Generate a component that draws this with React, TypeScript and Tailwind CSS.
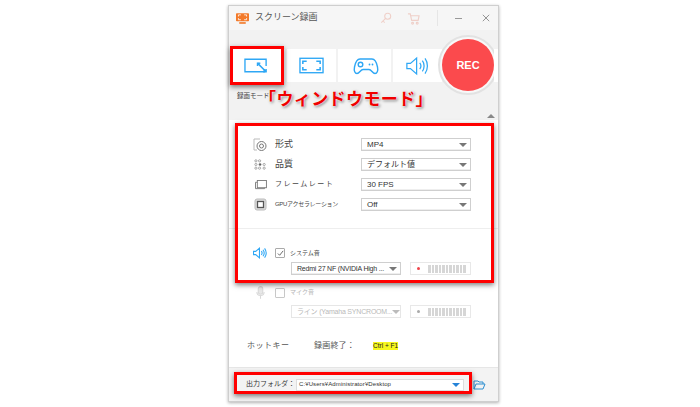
import React from "react";

const jp = "font-['Liberation_Sans','Noto_Sans_CJK_JP',sans-serif]";

const Caret = ({ color = "border-t-[#777]" }: { color?: string }) => (
  <span className={`shrink-0 w-0 h-0 border-x-[4px] border-x-transparent border-t-[4px] ${color}`} />
);

const Select = ({ text, muted = false, small = false }: { text: string; muted?: boolean; small?: boolean }) => (
  <div
    className={`w-[110px] h-[13px] flex items-center justify-between pl-[5px] pr-[3px] border bg-white leading-none ${
      muted ? "border-[#e6e6e6] text-[#b9b9b9]" : "border-[#cfcfcf] text-[#333] shadow-[inset_0_-1px_0_#eee]"
    } ${small ? "text-[7px] tracking-[-0.2px]" : "text-[8px]"}`}
  >
    <span className="whitespace-nowrap">{text}</span>
    <Caret color={muted ? "border-t-[#bbb]" : "border-t-[#777]"} />
  </div>
);

const Meter = ({ dot }: { dot: string }) => (
  <div className="w-[61px] h-[13px] ml-[9px] border border-[#e8e8e8] bg-white flex items-center pl-[6px] gap-[8px]">
    <span className={`w-[3px] h-[3px] rounded-full ${dot}`} />
    <div className="flex gap-[1px]">
      {Array.from({ length: 11 }).map((_, i) => (
        <span key={i} className="w-[2.5px] h-[8px] bg-[#d6d6d6]" />
      ))}
    </div>
  </div>
);

const ToolButton = ({ w, children }: { w: string; children: React.ReactNode }) => (
  <div className={`${w} h-[33px] bg-white flex items-center justify-center`}>{children}</div>
);

const Speaker = ({ className, weight = 1.4 }: { className: string; weight?: number }) => (
  <svg viewBox="0 0 26 22" className={className} fill="none" stroke="#2ea7f5" strokeWidth={weight}>
    <path d="M1 8h4l7-6v18l-7-6H1z" />
    <path d="M15.5 7.5c1.6 2 1.6 5 0 7M18.5 5c2.6 3.4 2.6 8.6 0 12M21.5 2.5c3.6 5 3.6 12 0 17" />
  </svg>
);

const SettingRow = ({ icon, label, value, labelClass = "text-[9px]" }: { icon: React.ReactNode; label: string; value: string; labelClass?: string }) => (
  <div className="flex items-center h-[13px]">
    <div className="w-[14px] flex justify-center">{icon}</div>
    <span className={`ml-[8px] w-[86px] whitespace-nowrap text-[#444] ${labelClass}`}>{label}</span>
    <Select text={value} />
  </div>
);

export default function App() {
  return (
    <div className={`relative w-[700px] h-[407px] bg-white overflow-hidden ${jp}`}>
      {/* window */}
      <div className="ml-[228px] mt-[5px] w-[271px] h-[397px] flex flex-col bg-white border border-[#cfcfcf] shadow-[0_1px_3px_rgba(0,0,0,0.3)]">
        <div className="h-[24px] flex items-center bg-[#f6f6f6] pl-[7px] shrink-0">
          <svg viewBox="0 0 16 13" className="w-[13px] h-[11px] shrink-0">
            <rect x="0" y="0" width="16" height="10" rx="1" fill="#f37a2a" />
            <rect x="4" y="11" width="8" height="2" fill="#f37a2a" />
            <path d="M3 4V2h3M13 4V2h-3M3 6v2h3M13 6v2h-3" stroke="#fff" fill="none" />
          </svg>
          <span className="ml-[6px] text-[9px] text-[#555] whitespace-nowrap">スクリーン録画</span>
          <svg viewBox="0 0 14 14" className="ml-[62px] w-[12px] h-[12px] shrink-0" fill="none" stroke="#efcfc8" strokeWidth="1.2">
            <circle cx="9" cy="5" r="3.5" />
            <path d="M6.5 7.5 1.5 12.5M3.5 10.5l2 2" />
          </svg>
          <svg viewBox="0 0 14 14" className="ml-[15px] w-[13px] h-[13px] shrink-0" fill="none" stroke="#efcfc8" strokeWidth="1.2">
            <path d="M1 2h2.5l1.5 7h7l1-5H4" />
            <circle cx="6" cy="12" r="1" />
            <circle cx="11" cy="12" r="1" />
          </svg>
          <span className="ml-[17px] w-px h-[16px] bg-[#e6e6e6] shrink-0" />
          <span className="ml-[17px] w-[7px] h-px bg-[#999] shrink-0" />
          <svg viewBox="0 0 10 10" className="ml-[20px] w-[8px] h-[8px] shrink-0" stroke="#888" strokeWidth="1.1">
            <path d="M1 1l8 8M9 1l-8 8" />
          </svg>
        </div>

        <div className="h-[90px] bg-[#f2f2f2] shrink-0 relative overflow-hidden">
          <div className="flex items-center mt-[19px] pl-[3px] gap-[2px]">
            <ToolButton w="w-[53px]">
              <svg viewBox="0 0 26 16" className="w-[25px] h-[16px] mr-[4px]" fill="none" stroke="#2ea7f5" strokeWidth="1.4">
                <path d="M21 11v3H1V1h22v7" />
                <path d="M14 5l9 9" strokeWidth="1.6" />
                <path d="M14 8V5h3M23 11v3h-3" fill="#2ea7f5" />
              </svg>
            </ToolButton>
            <ToolButton w="w-[49px]">
              <svg viewBox="0 0 26 17" className="w-[25px] h-[17px]" fill="none" stroke="#2ea7f5" strokeWidth="1.4">
                <rect x="1" y="1" width="24" height="15" />
                <path d="M4 7V4h4M22 7V4h-4M4 10v3h4M22 10v3h-4" strokeWidth="1.6" />
              </svg>
            </ToolButton>
            <ToolButton w="w-[53px]">
              <svg viewBox="0 0 26 18" className="w-[26px] h-[18px] ml-[2px]" fill="none" stroke="#2ea7f5" strokeWidth="1.4">
                <path d="M7 2h12c3 0 4.500 3 5.500 8 .8 4-.5 6.500-2.500 6.500-2.500 0-3.500-4-6-4h-6c-2.500 0-3.500 4-6 4-2 0-3.300-2.500-2.500-6.500C2.500 5 4 2 7 2z" />
                <circle cx="7.500" cy="7.500" r="2.300" />
                <circle cx="16.500" cy="7.500" r="0.900" fill="#2ea7f5" stroke="none" />
                <circle cx="19.500" cy="7.500" r="0.900" fill="#2ea7f5" stroke="none" />
              </svg>
            </ToolButton>
            <ToolButton w="w-[49px]">
              <Speaker className="w-[23px] h-[20px]" />
            </ToolButton>
          </div>
          <span className="absolute left-[209px] top-[5px] w-[60px] h-[60px] rounded-full bg-[#f8f8f8] border-[2px] border-[#e2e2e2]" />
          <div className="absolute left-[213px] top-[9px] w-[52px] h-[52px] rounded-full bg-[#fb4a4d] flex items-center justify-center text-white text-[11px] font-bold">
            REC
          </div>
          <span className="absolute right-0 top-[19px] w-[4px] h-[33px] bg-white" />
          <div className="mt-[9px] pl-[8px] text-[6.500px] text-[#444] whitespace-nowrap">録画モード</div>
          <span className="absolute right-[3px] bottom-[2px] w-0 h-0 border-x-[4px] border-x-transparent border-b-[4px] border-b-[#888]" />
        </div>

        <div className="flex-1 flex flex-col">
          <div className="pl-[24px] pt-[18px] flex flex-col gap-[7px] h-[109px] border-b border-[#eee]">
            <SettingRow
              label="形式"
              value="MP4"
              icon={
                <svg viewBox="0 0 14 14" className="w-[14px] h-[14px]" fill="none" stroke="#777" strokeWidth="1">
                  <path d="M1 1h6M1 1v11h3" stroke="#bbb" />
                  <circle cx="8.500" cy="8" r="4.500" />
                  <circle cx="8.500" cy="8" r="2" />
                </svg>
              }
            />
            <SettingRow
              label="品質"
              value="デフォルト値"
              icon={
                <svg viewBox="0 0 14 12" className="w-[13px] h-[11px]" fill="none" stroke="#999" strokeWidth="0.9">
                  <circle cx="2" cy="2" r="1.200" /><circle cx="6" cy="2" r="1.200" />
                  <circle cx="2" cy="6" r="1.200" /><circle cx="6.500" cy="6" r="1.200" fill="#444" /><circle cx="11" cy="6" r="1.200" />
                  <circle cx="2" cy="10" r="1.200" /><circle cx="6" cy="10" r="1.200" /><circle cx="11" cy="10" r="1.200" />
                </svg>
              }
            />
            <SettingRow
              label="フレームレート"
              labelClass="text-[7px] tracking-[1.500px]"
              value="30 FPS"
              icon={
                <svg viewBox="0 0 14 11" className="w-[13px] h-[10px]" fill="none" stroke="#777" strokeWidth="1">
                  <rect x="3.500" y="0.500" width="10" height="8" />
                  <path d="M3.500 2.500H1.500v7h10V8.500" />
                </svg>
              }
            />
            <SettingRow
              label="GPUアクセラレーション"
              labelClass="text-[6px] tracking-[-0.300px]"
              value="Off"
              icon={
                <svg viewBox="0 0 13 13" className="w-[13px] h-[13px]" fill="none" stroke="#555" strokeWidth="1">
                  <rect x="1" y="1" width="11" height="11" rx="2" fill="#ddd" stroke="#bbb" />
                  <rect x="3.500" y="3.500" width="6" height="6" fill="#fff" strokeWidth="1.300" />
                </svg>
              }
            />
          </div>

          <div className="pl-[24px] pt-[18px] h-[38px]">
            <div className="flex items-center">
              <div className="w-[14px] flex justify-center">
                <Speaker className="w-[14px] h-[12px]" weight={2} />
              </div>
              <span className="ml-[8px] w-[10px] h-[10px] rounded-[1px] border border-[#aaa] flex items-center justify-center">
                <svg viewBox="0 0 8 8" className="w-[7px] h-[7px]" fill="none" stroke="#555" strokeWidth="1">
                  <path d="M1 4l2 2 4-5" />
                </svg>
              </span>
              <span className="ml-[5px] text-[6px] text-[#444]">システム音</span>
            </div>
          </div>
          <div className="flex pl-[62px] mt-[-5px]">
            <Select text="Redmi 27 NF (NVIDIA High ..." small />
            <Meter dot="bg-[#f0444a]" />
          </div>

          <div className="pl-[24px] mt-[11px] flex items-center">
            <div className="w-[14px] flex justify-center">
              <svg viewBox="0 0 10 14" className="w-[9px] h-[13px]" fill="none" stroke="#d8d8d8" strokeWidth="1.200">
                <rect x="2.500" y="0.500" width="5" height="8.500" rx="2.500" fill="#e8e8e8" />
                <path d="M1 6.500c0 5 8 5 8 0M5 11v3" />
              </svg>
            </div>
            <span className="ml-[8px] w-[10px] h-[10px] rounded-[1px] border border-[#c8c8c8]" />
            <span className="ml-[5px] text-[6px] text-[#b5b5b5]">マイク音</span>
          </div>
          <div className="flex pl-[62px] mt-[6px]">
            <Select text="ライン (Yamaha SYNCROOM..." muted small />
            <Meter dot="bg-[#aaa]" />
          </div>

          <div className="flex items-center pl-[18px] mt-[22px] text-[8px] text-[#555]">
            <span className="w-[67px] tracking-[0.500px]">ホットキー</span>
            <span className="w-[59px] tracking-[0.200px]">録画終了：</span>
            <span className="bg-[#f7f71e] text-[#222] text-[6.500px] leading-[8px] font-medium">Ctrl + F1</span>
          </div>

          <div className="mt-auto h-[34px] bg-[#f3f3f3] border-t border-[#e6e6e6] flex items-center pl-[17px]">
            <span className="w-[50px] text-[7px] text-[#333] whitespace-nowrap">出力フォルダ：</span>
            <div className="w-[168px] h-[12px] bg-white border border-[#ddd] flex items-center justify-between pl-[2px] pr-[3px] text-[6px] tracking-[0.100px] text-[#333]">
              <span>C:¥Users¥Administrator¥Desktop</span>
              <Caret color="border-t-[#2583d8]" />
            </div>
            <svg viewBox="0 0 14 10" className="ml-[8px] w-[14px] h-[10px]" fill="none" stroke="#2e8fd0" strokeWidth="1">
              <path d="M2 9V1h4l1 1h4v2M2 9h9l2-5H4z" />
            </svg>
          </div>
        </div>
      </div>

      {/* red annotation frames */}
      <div className="absolute left-[230px] top-[46px] w-[54px] h-[39px] border-[3px] border-[#ff0000] shadow-[0_2px_5px_rgba(0,0,0,0.5)]" />
      <div className="absolute left-[235px] top-[123px] w-[259px] h-[160px] border-[3px] border-[#ff0000] shadow-[0_2px_5px_rgba(0,0,0,0.5)]" />
      <div className="absolute left-[234px] top-[372px] w-[238px] h-[22px] border-[3px] border-[#ff0000] shadow-[0_2px_5px_rgba(0,0,0,0.5)]" />
      <div className="absolute left-[259px] top-[88px] text-[17px] font-bold leading-[24px] tracking-[0.400px] text-[#f00000] whitespace-nowrap [text-shadow:0_0_2px_#fff,0_0_3px_#fff,1px_1px_3px_rgba(0,0,0,0.7)]">
        「ウィンドウモード」
      </div>
    </div>
  );
}
